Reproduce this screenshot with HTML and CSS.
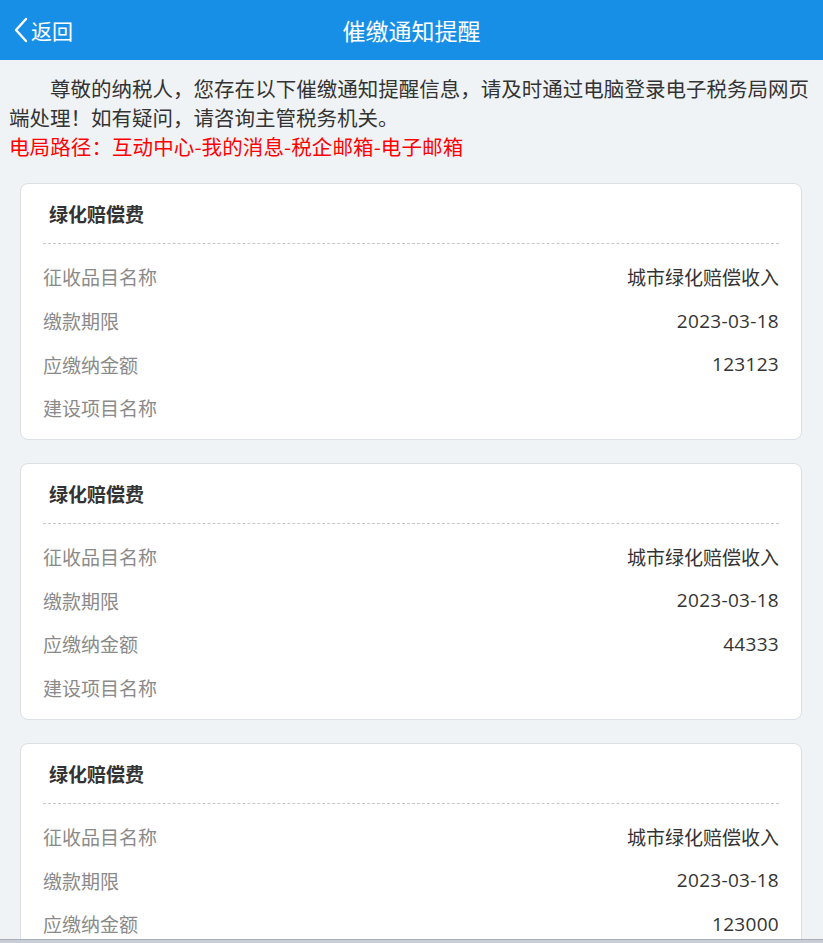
FILE: index.html
```html
<!DOCTYPE html>
<html lang="zh-CN">
<head>
<meta charset="utf-8">
<title>催缴通知提醒</title>
<link rel="stylesheet" href="styles.css">
</head>
<body>
<header class="topbar">
  <a class="back">
    <svg class="back-icon" width="16" height="26" viewBox="0 0 16 26"><path d="M13 2 L3 13 L13 24" fill="none" stroke="#fff" stroke-width="2.4" stroke-linecap="round" stroke-linejoin="round"/></svg>
    <span>返回</span>
  </a>
  <h1 class="title">催缴通知提醒</h1>
</header>

<section class="intro">
  <p class="notice">尊敬的纳税人，您存在以下催缴通知提醒信息，请及时通过电脑登录电子税务局网页端处理！如有疑问，请咨询主管税务机关。</p>
  <p class="path">电局路径：互动中心-我的消息-税企邮箱-电子邮箱</p>
</section>

<main class="list">
  <div class="card">
    <div class="card-title">绿化赔偿费</div>
    <div class="rows">
      <div class="row"><span class="label">征收品目名称</span><span class="value">城市绿化赔偿收入</span></div>
      <div class="row"><span class="label">缴款期限</span><span class="value num">2023-03-18</span></div>
      <div class="row"><span class="label">应缴纳金额</span><span class="value num">123123</span></div>
      <div class="row"><span class="label">建设项目名称</span><span class="value"></span></div>
    </div>
  </div>
  <div class="card">
    <div class="card-title">绿化赔偿费</div>
    <div class="rows">
      <div class="row"><span class="label">征收品目名称</span><span class="value">城市绿化赔偿收入</span></div>
      <div class="row"><span class="label">缴款期限</span><span class="value num">2023-03-18</span></div>
      <div class="row"><span class="label">应缴纳金额</span><span class="value num">44333</span></div>
      <div class="row"><span class="label">建设项目名称</span><span class="value"></span></div>
    </div>
  </div>
  <div class="card">
    <div class="card-title">绿化赔偿费</div>
    <div class="rows">
      <div class="row"><span class="label">征收品目名称</span><span class="value">城市绿化赔偿收入</span></div>
      <div class="row"><span class="label">缴款期限</span><span class="value num">2023-03-18</span></div>
      <div class="row"><span class="label">应缴纳金额</span><span class="value num">123000</span></div>
      <div class="row"><span class="label">建设项目名称</span><span class="value"></span></div>
    </div>
  </div>
</main>
<div class="bottom-strip"></div>
</body>
</html>
```

FILE: styles.css
```css
* { box-sizing: border-box; }
html, body { margin: 0; padding: 0; }
body {
  background: #f0f3f6;
  font-family: "Microsoft YaHei", "Noto Sans CJK SC", "Noto Sans", sans-serif;
  color: #333;
}
.topbar {
  height: 60px;
  background: #188fe7;
  color: #fff;
  display: flex;
  align-items: center;
  justify-content: center;
  position: relative;
}
.back {
  position: absolute;
  left: 13px;
  top: 0;
  height: 60px;
  display: flex;
  align-items: center;
  gap: 2px;
  font-size: 21px;
  color: #fff;
}
.back-icon { display: block; }
.title {
  margin: 0;
  font-size: 23px;
  font-weight: normal;
  line-height: 60px;
}
.intro {
  padding: 14px 14px 0 9px;
}
.intro p {
  margin: 0;
  font-size: 20.5px;
  line-height: 29px;
}
.notice {
  text-indent: 2em;
  text-align: justify;
  color: #333;
}
.path { color: #ff0000; letter-spacing: 0.1px; }
.list {
  padding: 22px 21px 0 20px;
  display: flex;
  flex-direction: column;
  gap: 23px;
}
.card {
  background: #fff;
  border: 1px solid #dcdfe3;
  border-radius: 8px;
  padding: 0 22px;
}
.card-title {
  padding: 11px 6px 10px;
  line-height: 38px;
  font-size: 19px;
  font-weight: bold;
  color: #333;
  border-bottom: 1px dashed #c8c8c8;
}
.rows { padding: 11px 0 9px; }
.row {
  display: flex;
  justify-content: space-between;
  align-items: center;
  height: 43.7px;
  font-size: 19px;
}
.label { color: #8a8a8a; }
.value { color: #333; }
.num {
  font-family: "Open Sans", "Noto Sans", sans-serif;
  letter-spacing: 0.3px;
}
.bottom-strip {
  position: fixed;
  left: 0;
  right: 0;
  bottom: 0;
  height: 4px;
  background: #c9ced6;
  border-top: 1px solid #a8afb9;
}
```
